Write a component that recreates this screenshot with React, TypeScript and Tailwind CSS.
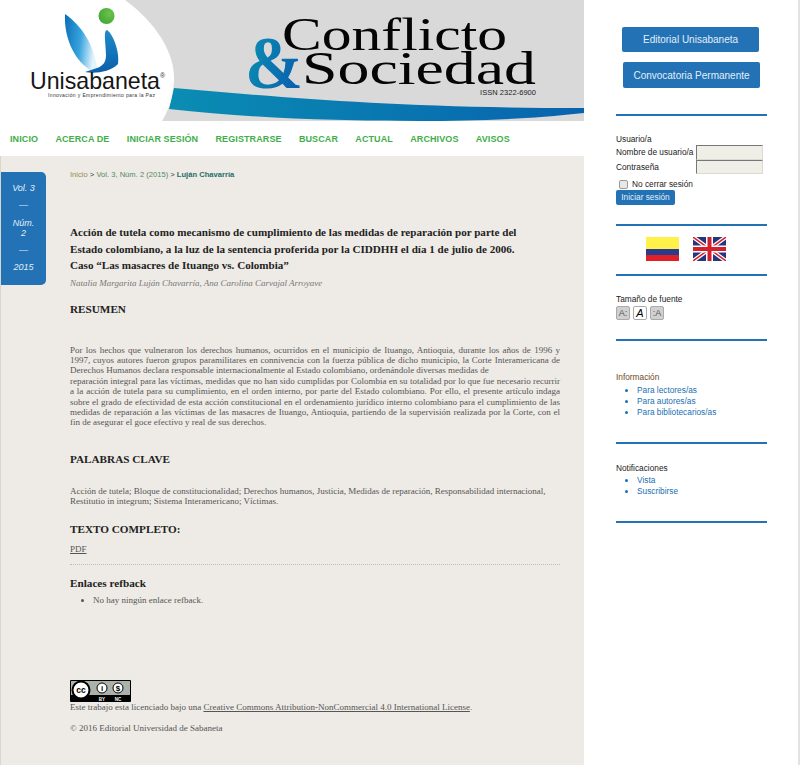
const navItems = ["INICIO", "ACERCA DE", "INICIAR SESIÓN", "REGISTRARSE", "BUSCAR", "ACTUAL", "ARCHIVOS", "AVISOS"]

function Banner() {
  return (
    <svg width="584" height="121" viewBox="0 0 584 121" className="block shrink-0">
      <defs>
        <linearGradient id="swoosh" x1="0" x2="1" y1="0" y2="0">
          <stop offset="0" stopColor="#0a8db3" />
          <stop offset="1" stopColor="#0863ae" />
        </linearGradient>
        <linearGradient id="amp" x1="0" x2="1" y1="0" y2="0.4">
          <stop offset="0" stopColor="#0b94b4" />
          <stop offset="1" stopColor="#0a62ae" />
        </linearGradient>
        <linearGradient id="leaf" x1="0" x2="1" y1="0" y2="0.2">
          <stop offset="0" stopColor="#0d6db5" />
          <stop offset="0.55" stopColor="#36a3de" />
          <stop offset="1" stopColor="#e4f4fc" />
        </linearGradient>
        <linearGradient id="stem" x1="0" x2="0" y1="0" y2="1">
          <stop offset="0" stopColor="#1f8ccb" />
          <stop offset="1" stopColor="#0a5fa9" />
        </linearGradient>
        <radialGradient id="dot" cx="0.7" cy="0.35" r="0.8">
          <stop offset="0" stopColor="#6cc24a" />
          <stop offset="1" stopColor="#3fa535" />
        </radialGradient>
      </defs>
      <rect width="584" height="121" fill="#d9d9d9" />
      <path d="M174 88 C 290 98 400 108 584 108 V 113 C 520 120 470 121 420 121 C 330 121 250 118 169 109 Z" fill="url(#swoosh)" />
      <path d="M0 0 H125 C 155 22 175 52 174 80 C 173 96 170 108 162 121 H0 Z" fill="#fff" />

      {/* logo */}
      <path d="M65 14 C 64 35 72 58 90 70 L 97 68 C 94 45 82 26 65 14 Z" fill="url(#leaf)" />
      <path d="M107 30 C 103 30 106 45 106 55 C 106 62 103 66 97 68 L 85 72 C 95 74 110 72 118 64 C 120 52 113 34 107 30 Z" fill="url(#stem)" />
      <circle cx="106.500" cy="16" r="8" fill="url(#dot)" />
      <text x="30" y="89" fontFamily="'Liberation Sans', sans-serif" fontSize="24" fill="#161616" textLength="130" lengthAdjust="spacingAndGlyphs">
        Unisabaneta
      </text>
      <text x="160" y="78" fontFamily="'Liberation Sans', sans-serif" fontSize="7" fill="#333">®</text>
      <text x="48" y="97" fontFamily="'Liberation Sans', sans-serif" fontSize="5" fill="#333" textLength="107">
        Innovación y Emprendimiento para la Paz
      </text>

      {/* title */}
      <text x="245" y="88" fontFamily="'Liberation Serif', serif" fontSize="74" fontWeight="700" fill="url(#amp)" textLength="58" lengthAdjust="spacingAndGlyphs">&amp;</text>
      <text x="282" y="50" fontFamily="'Liberation Serif', serif" fontSize="46" fill="#050505" textLength="225" lengthAdjust="spacingAndGlyphs">Conflicto</text>
      <text x="302" y="84" fontFamily="'Liberation Serif', serif" fontSize="46" fill="#050505" textLength="234" lengthAdjust="spacingAndGlyphs">Sociedad</text>
      <text x="480" y="95" fontFamily="'Liberation Sans', sans-serif" fontSize="7.500" fill="#222" textLength="56">ISSN 2322-6900</text>
    </svg>
  )
}

function Rule() {
  return <div className="h-[2px] w-[151px] bg-[#2272b5]" />
}

function FontIcon({ label, active }: { label: string; active?: boolean }) {
  return (
    <span
      className={`flex h-[14px] w-[14px] items-center justify-center rounded-[2px] border border-[#aaa] leading-none ${active ? "bg-white text-[11px] italic text-black" : "bg-[#d0d0d0] text-[9px] text-[#555]"}`}
    >
      {label}
    </span>
  )
}

function CcBadge() {
  return (
    <svg width="61" height="22" viewBox="0 0 61 22" className="block">
      <rect width="61" height="22" rx="1" fill="#000" />
      <rect x="1" y="1" width="59" height="14" fill="#aab2ab" />
      <circle cx="11" cy="10" r="8.500" fill="#fff" stroke="#000" strokeWidth="2" />
      <text x="11" y="13" textAnchor="middle" fontFamily="'Liberation Sans', sans-serif" fontSize="8.500" fontWeight="700" fill="#000">cc</text>
      <circle cx="32" cy="8" r="5" fill="#fff" stroke="#000" strokeWidth="1" />
      <text x="32" y="11" textAnchor="middle" fontFamily="'Liberation Sans', sans-serif" fontSize="8" fontWeight="700" fill="#000">i</text>
      <circle cx="48" cy="8" r="5" fill="#fff" stroke="#000" strokeWidth="1" />
      <text x="48" y="11" textAnchor="middle" fontFamily="'Liberation Sans', sans-serif" fontSize="8" fontWeight="700" fill="#000">$</text>
      <text x="32" y="20.500" textAnchor="middle" fontFamily="'Liberation Sans', sans-serif" fontSize="4.500" fontWeight="700" fill="#fff">BY</text>
      <text x="48" y="20.500" textAnchor="middle" fontFamily="'Liberation Sans', sans-serif" fontSize="4.500" fontWeight="700" fill="#fff">NC</text>
    </svg>
  )
}

function Flags() {
  return (
    <div className="flex gap-[14px] pl-[30px]">
      <svg width="33" height="24" viewBox="0 0 33 24" className="block">
        <rect width="33" height="12" fill="#fff04a" />
        <rect y="12" width="33" height="6" fill="#2a3b8c" />
        <rect y="18" width="33" height="6" fill="#e01f26" />
      </svg>
      <svg width="33" height="24" viewBox="0 0 33 24" className="block">
        <rect width="33" height="24" fill="#27357f" />
        <path d="M0 0 L33 24 M33 0 L0 24" stroke="#fff" strokeWidth="4" />
        <path d="M0 0 L33 24 M33 0 L0 24" stroke="#d3202c" strokeWidth="1.500" />
        <path d="M16.500 0 V24 M0 12 H33" stroke="#fff" strokeWidth="7" />
        <path d="M16.500 0 V24 M0 12 H33" stroke="#d3202c" strokeWidth="4" />
      </svg>
    </div>
  )
}

export default function App() {
  return (
    <div className="flex h-[765px] w-[800px] overflow-hidden bg-white font-['Liberation_Sans',sans-serif]">
      <div className="flex w-[584px] shrink-0 flex-col">
        <Banner />
        <nav className="flex h-[35px] shrink-0 items-center gap-[17.300px] bg-white pl-[10px] pt-[2px] text-[9px] font-bold tracking-[0.1px] text-[#3fae49]">
          {navItems.map((item) => (
            <span key={item}>{item}</span>
          ))}
        </nav>

        <div className="flex flex-1 border-l border-[#d8d6cf] bg-[#eeebe6]">
          <div className="mt-[16px] flex h-[113px] w-[45px] shrink-0 flex-col items-center rounded-r-[5px] bg-[#2272b5] pt-[11px] text-center text-[9px] italic leading-[10px] text-[#e4eef7]">
            <span>Vol. 3</span>
            <span className="mt-[7px]">—</span>
            <span className="mt-[8px] w-[24px]">Núm. 2</span>
            <span className="mt-[7px]">—</span>
            <span className="mt-[7px]">2015</span>
          </div>

          <main className="ml-[24px] w-[490px] font-['Liberation_Serif',serif] text-[9px] text-[#555]">
            <p className="mt-[14px] font-['Liberation_Sans',sans-serif] text-[7.600px] leading-[10px] text-[#4f8a63]">
              <span className="text-[#9a8a4e]">Inicio</span> <span className="text-[#333]">&gt;</span> Vol. 3, Núm. 2 (2015) <span className="text-[#333]">&gt;</span>{" "}
              <b className="text-[#1f6e66]">Luján Chavarría</b>
            </p>

            <h1 className="mt-[44px] w-[460px] text-[11.100px] font-bold leading-[16.500px] text-[#222]">
              Acción de tutela como mecanismo de cumplimiento de las medidas de reparación por parte del Estado colombiano, a la luz de la sentencia proferida por la CIDDHH el día 1 de julio de 2006.
              <br />
              Caso “Las masacres de Ituango vs. Colombia”
            </h1>
            <p className="mt-[3px] italic leading-[12px] text-[#777]">Natalia Margarita Luján Chavarría, Ana Carolina Carvajal Arroyave</p>

            <h2 className="mt-[13px] text-[11.200px] font-bold leading-[14px] text-[#222]">RESUMEN</h2>

            <p className="mt-[29px] text-justify leading-[10.400px]">
              Por los hechos que vulneraron los derechos humanos, ocurridos en el municipio de Ituango, Antioquia, durante los años de 1996 y 1997, cuyos autores fueron grupos paramilitares en connivencia con la fuerza pública de dicho municipio, la Corte Interamericana de Derechos Humanos declara responsable internacionalmente al Estado colombiano, ordenándole diversas medidas de
              <br />
              reparación integral para las víctimas, medidas que no han sido cumplidas por Colombia en su totalidad por lo que fue necesario recurrir a la acción de tutela para su cumplimiento, en el orden interno, por parte del Estado colombiano. Por ello, el presente artículo indaga sobre el grado de efectividad de esta acción constitucional en el ordenamiento jurídico interno colombiano para el cumplimiento de las medidas de reparación a las víctimas de las masacres de Ituango, Antioquia, partiendo de la supervisión realizada por la Corte, con el fin de asegurar el goce efectivo y real de sus derechos.
            </p>

            <h2 className="mt-[24px] text-[11.200px] font-bold leading-[14px] text-[#222]">PALABRAS CLAVE</h2>

            <p className="mt-[20px] leading-[10.200px]">
              Acción de tutela; Bloque de constitucionalidad; Derechos humanos, Justicia, Medidas de reparación, Responsabilidad internacional, Restitutio in integrum; Sistema Interamericano; Víctimas.
            </p>

            <h2 className="mt-[16px] text-[11.200px] font-bold leading-[14px] text-[#222]">TEXTO COMPLETO:</h2>
            <a className="mt-[7px] block leading-[12px] underline">PDF</a>

            <div className="mt-[9px] border-t border-dotted border-[#bbb]" />

            <h2 className="mt-[11px] text-[11.200px] font-bold leading-[14px] text-[#222]">Enlaces refback</h2>
            <ul className="mt-[5px] list-disc pl-[23px] leading-[11px]">
              <li>No hay ningún enlace refback.</li>
            </ul>

            <div className="mt-[74px]">
              <CcBadge />
            </div>
            <p className="leading-[10px]">
              Este trabajo esta licenciado bajo una <a className="underline">Creative Commons Attribution-NonCommercial 4.0 International License</a>.
            </p>
            <p className="mt-[11px] leading-[10px]">© 2016 Editorial Universidad de Sabaneta</p>
          </main>
        </div>
      </div>

      <aside className="flex-1 border-r-2 border-[#e2e2e2] pl-[32px] text-[8.300px] text-[#222]">
        <a className="ml-[6px] mt-[27px] flex h-[25px] w-[137px] items-center justify-center rounded-[2px] bg-[#2272b5] text-[10px] text-[#e4eef7]">Editorial Unisabaneta</a>
        <a className="ml-[7px] mt-[10px] flex h-[26px] w-[137px] items-center justify-center rounded-[2px] bg-[#2272b5] text-[10px] text-[#e4eef7]">Convocatoria Permanente</a>

        <div className="mt-[26px]">
          <Rule />
        </div>

        <div className="mt-[18px] leading-[11px]">Usuario/a</div>
        <div className="flex h-[14.500px] items-center">
          <span className="w-[80px]">Nombre de usuario/a</span>
          <span className="h-[15px] w-[67px] border border-[#dcdbd3] border-l-[#777] border-t-[#777] bg-[#efeee7]" />
        </div>
        <div className="flex h-[14.500px] items-center">
          <span className="w-[80px]">Contraseña</span>
          <span className="h-[14px] w-[67px] border border-[#dcdbd3] border-l-[#777] border-t-[#777] bg-[#efeee7]" />
        </div>
        <div className="mt-[5px] flex h-[11px] items-center pl-[3px]">
          <span className="h-[9px] w-[9px] rounded-[2px] border border-[#999] bg-[#e8e8e8]" />
          <span className="ml-[4px]">No cerrar sesión</span>
        </div>
        <div className="flex h-[15px] w-[59px] items-center justify-center rounded-[2px] bg-[#2272b5] text-[#e4eef7]">Iniciar sesión</div>

        <div className="mt-[19px]">
          <Rule />
        </div>
        <div className="mt-[11px]">
          <Flags />
        </div>
        <div className="mt-[13px]">
          <Rule />
        </div>

        <div className="mt-[18px] leading-[11px]">Tamaño de fuente</div>
        <div className="mt-[1px] flex gap-[3px]">
          <FontIcon label="A:" />
          <FontIcon label="A" active />
          <FontIcon label=":A" />
        </div>

        <div className="mt-[19px]">
          <Rule />
        </div>

        <div className="mt-[31px] leading-[11px] text-[#6e4a1e]">Información</div>
        <ul className="list-disc pl-[21px] leading-[11px] text-[#1a6fb3]">
          <li className="mt-[2px]">Para lectores/as</li>
          <li>Para autores/as</li>
          <li>Para bibliotecarios/as</li>
        </ul>

        <div className="mt-[24px]">
          <Rule />
        </div>

        <div className="mt-[19px] leading-[11px]">Notificaciones</div>
        <ul className="list-disc pl-[21px] leading-[11px] text-[#1a6fb3]">
          <li className="mt-[1px]">Vista</li>
          <li>Suscribirse</li>
        </ul>

        <div className="mt-[24px]">
          <Rule />
        </div>
      </aside>
    </div>
  )
}
